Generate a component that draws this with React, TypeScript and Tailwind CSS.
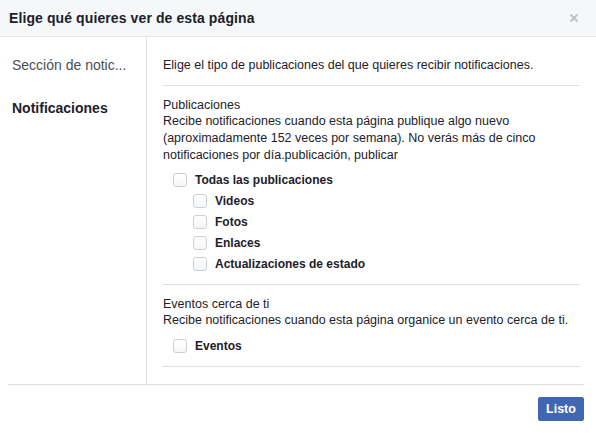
import React from 'react'

const subOptions = ['Videos', 'Fotos', 'Enlaces', 'Actualizaciones de estado']

function Checkbox({ label, indent = false }: { label: string; indent?: boolean }) {
  return (
    <label className={`flex h-[21px] items-center gap-2 ${indent ? 'pl-[30px]' : 'pl-[10px]'}`}>
      <span className="h-[14px] w-[14px] rounded-[3px] border border-[#ccd0d5] bg-gradient-to-b from-white to-[#f5f6f7]" />
      <span className="text-[12px] font-bold text-[#1d2129]">{label}</span>
    </label>
  )
}

export default function App() {
  return (
    <div
      className="h-[433px] w-[596px] bg-white text-[#1d2129]"
      style={{ fontFamily: '"Liberation Sans", Arial, Helvetica, sans-serif' }}
    >
      {/* Header */}
      <header className="flex h-[37px] items-center justify-between border-b border-[#e5e5e5] bg-[#f6f7f9] pl-[9px] pr-[14px]">
        <h2 className="text-[14px] font-bold leading-[18px] tracking-[0.1px] text-[#1d2129]">
          Elige qué quieres ver de esta página
        </h2>
        <button className="flex h-4 w-4 items-center justify-center">
          <svg width="10" height="10" viewBox="0 0 10 10">
            <path d="M1.5 1.5 L8.5 8.5 M8.5 1.5 L1.5 8.5" stroke="#bec2c9" strokeWidth="2" />
          </svg>
        </button>
      </header>

      {/* Body */}
      <div className="ml-2 mr-3 flex h-[348px] border-b border-[#dddfe2]">
        <aside className="w-[139px] border-r border-[#dddfe2] pl-1 pt-[19px]">
          <div className="h-[18px] text-[14px] leading-[18px] text-[#4b4f56]">Sección de notic...</div>
          <div className="mt-[25px] text-[14px] font-bold leading-[18px] text-[#1d2129]">Notificaciones</div>
        </aside>

        <main className="flex-1 pl-4 pr-1 pt-5">
          <p className="text-[12.5px] leading-4 text-[#1d2129]">
            Elige el tipo de publicaciones del que quieres recibir notificaciones.
          </p>

          <section className="mt-3 border-t border-[#dddfe2] pt-[11px] pb-[10px]">
            <div className="text-[12.5px] leading-4 text-[#1d2129]">Publicaciones</div>
            <p className="text-[12.5px] leading-[17px] text-[#1d2129]">
              <span className="block">Recibe notificaciones cuando esta página publique algo nuevo</span>
              <span className="block">(aproximadamente 152 veces por semana). No verás más de cinco</span>
              <span className="block">notificaciones por día.publicación, publicar</span>
            </p>
            <div className="mt-[5px]">
              <Checkbox label="Todas las publicaciones" />
              {subOptions.map((o) => (
                <Checkbox key={o} label={o} indent />
              ))}
            </div>
          </section>

          <section className="border-t border-[#dddfe2] pt-[11px] pb-[10px]">
            <div className="text-[12.5px] leading-4 text-[#1d2129]">Eventos cerca de ti</div>
            <p className="text-[12.5px] leading-[17px] text-[#1d2129]">
              Recibe notificaciones cuando esta página organice un evento cerca de ti.
            </p>
            <div className="mt-[6px]">
              <Checkbox label="Eventos" />
            </div>
          </section>

          <div className="border-t border-[#dddfe2]" />
        </main>
      </div>

      {/* Footer */}
      <footer className="flex justify-end pr-3 pt-3">
        <button className="h-6 w-[46px] rounded-[2px] border border-[#4267b2] bg-[#4267b2] text-[12.5px] font-bold text-white">
          Listo
        </button>
      </footer>
    </div>
  )
}
